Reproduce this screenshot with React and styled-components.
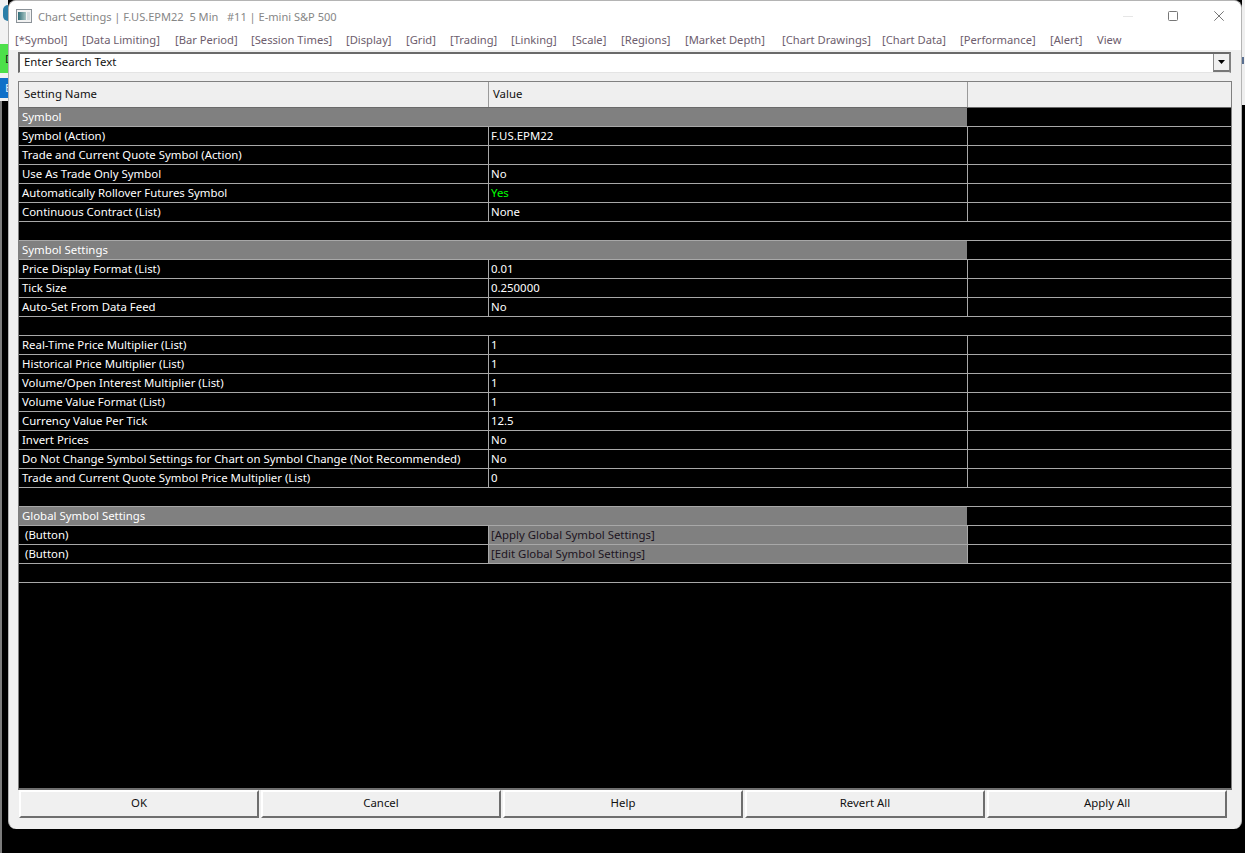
import styled, { createGlobalStyle } from "styled-components";

const GlobalStyle = createGlobalStyle`
  html, body {
    margin: 0;
    padding: 0;
    background: #000;
    overflow: hidden;
  }
`;

const TABS = [
  ["[*Symbol]", 15], ["[Data Limiting]", 82], ["[Bar Period]", 175], ["[Session Times]", 251],
  ["[Display]", 346], ["[Grid]", 406], ["[Trading]", 450], ["[Linking]", 511], ["[Scale]", 572],
  ["[Regions]", 621], ["[Market Depth]", 685], ["[Chart Drawings]", 782], ["[Chart Data]", 882],
  ["[Performance]", 960], ["[Alert]", 1050], ["View", 1097],
];

const ROWS = [
  { section: "Symbol" },
  { name: "Symbol (Action)", value: "F.US.EPM22" },
  { name: "Trade and Current Quote Symbol (Action)", value: "" },
  { name: "Use As Trade Only Symbol", value: "No" },
  { name: "Automatically Rollover Futures Symbol", value: "Yes", green: true },
  { name: "Continuous Contract (List)", value: "None" },
  { blank: true },
  { section: "Symbol Settings" },
  { name: "Price Display Format (List)", value: "0.01" },
  { name: "Tick Size", value: "0.250000" },
  { name: "Auto-Set From Data Feed", value: "No" },
  { blank: true },
  { name: "Real-Time Price Multiplier (List)", value: "1" },
  { name: "Historical Price Multiplier (List)", value: "1" },
  { name: "Volume/Open Interest Multiplier (List)", value: "1" },
  { name: "Volume Value Format (List)", value: "1" },
  { name: "Currency Value Per Tick", value: "12.5" },
  { name: "Invert Prices", value: "No" },
  { name: "Do Not Change Symbol Settings for Chart on Symbol Change (Not Recommended)", value: "No" },
  { name: "Trade and Current Quote Symbol Price Multiplier (List)", value: "0" },
  { blank: true },
  { section: "Global Symbol Settings" },
  { name: "(Button)", value: "[Apply Global Symbol Settings]", button: true },
  { name: "(Button)", value: "[Edit Global Symbol Settings]", button: true },
  { blank: true },
];

const BUTTONS = ["OK", "Cancel", "Help", "Revert All", "Apply All"];

const App = () => {
  return (
    <Desktop>
      <GlobalStyle />
      <LeftStrip>
        <Globe />
        <GreenTab>D</GreenTab>
        <BlueTab>E</BlueTab>
        <StripEdge />
      </LeftStrip>
      <Window>
        <TitleBar>
          <AppIcon viewBox="0 0 16 14">
            <defs>
              <linearGradient id="iconFill" x1="0" x2="1" y1="0" y2="0">
                <stop offset="0" stopColor="#2f6d78" />
                <stop offset="1" stopColor="#a9c6c4" />
              </linearGradient>
            </defs>
            <rect x="0.5" y="0.5" width="15" height="13" fill="#f2f2f2" stroke="#8b9298" />
            <rect x="2" y="3" width="8" height="8" fill="url(#iconFill)" />
            <rect x="11" y="3" width="3" height="8" fill="#d5dcdf" />
          </AppIcon>
          <Title>Chart Settings | F.US.EPM22&nbsp; 5 Min &nbsp; #11 | E-mini S&amp;P 500</Title>
          <WindowButtons>
            <svg width="10" height="1" viewBox="0 0 10 1"><rect width="10" height="1" fill="#e6e6e6" /></svg>
            <svg width="11" height="10" viewBox="0 0 11 10"><rect x="0.5" y="0.5" width="9" height="9" rx="1" fill="none" stroke="#777" /></svg>
            <svg width="10" height="10" viewBox="0 0 10 10"><path d="M0.3 0.3 L9.7 9.7 M9.7 0.3 L0.3 9.7" stroke="#777" fill="none" /></svg>
          </WindowButtons>
        </TitleBar>
        <TabBar>
          {TABS.map(([label, x], i) => (
            <Tab key={label} style={{ width: (i < TABS.length - 1 ? TABS[i + 1][1] : 1130) - x }}>{label}</Tab>
          ))}
        </TabBar>
        <Body>
          <SearchBox>
            <SearchText>Enter Search Text</SearchText>
            <DropButton><svg width="7" height="4" viewBox="0 0 7 4"><path d="M0 0 H7 L3.5 4 Z" fill="#000" /></svg></DropButton>
          </SearchBox>
          <Table>
            <HeaderRow>
              <HeaderCell>Setting Name</HeaderCell>
              <HeaderCell>Value</HeaderCell>
              <HeaderCell />
            </HeaderRow>
            {ROWS.map((row, i) => {
              if (row.section) {
                return (
                  <Row key={i}>
                    <SectionCell>{row.section}</SectionCell>
                    <Cell $plain />
                  </Row>
                );
              }
              if (row.blank) return <BlankRow key={i} />;
              return (
                <Row key={i}>
                  <Cell $indent={row.button}>{row.name}</Cell>
                  <Cell $green={row.green} $button={row.button}>{row.value}</Cell>
                  <Cell />
                </Row>
              );
            })}
            <Filler />
          </Table>
          <ButtonBar>
            {BUTTONS.map((b) => <BarButton key={b}>{b}</BarButton>)}
          </ButtonBar>
        </Body>
      </Window>
      <RightStrip>
        <RightMark />
      </RightStrip>
    </Desktop>
  );
};

const Desktop = styled.div`
  display: flex;
  width: 1245px;
  height: 853px;
  background: #000;
  font-family: "Noto Sans", "Open Sans", sans-serif;
  font-size: 11.4px;
  overflow: hidden;
`;
const LeftStrip = styled.div`
  display: flex;
  flex-direction: column;
  width: 8px;
  flex: none;
  background: #f2f2f2;
`;
const Globe = styled.div`
  flex: none;
  width: 5px;
  height: 16px;
  margin: 5px 0 23px 3px;
  border-radius: 6px 0 0 6px;
  background: #2c7fa8;
`;
const GreenTab = styled.div`
  flex: none;
  height: 29px;
  padding-left: 5px;
  line-height: 29px;
  color: #1a1a1a;
  background: #4de04a;
  overflow: hidden;
`;
const BlueTab = styled.div`
  flex: none;
  height: 20px;
  margin-top: 5px;
  padding-left: 5px;
  line-height: 20px;
  color: #e8f2fb;
  background: #1070c8;
  overflow: hidden;
`;
const StripEdge = styled.div`
  flex: 1;
  margin-top: 3px;
  background: #000;
  border-left: 2px solid #7c7c7c;
`;
const Window = styled.div`
  display: flex;
  flex-direction: column;
  flex: none;
  width: 1234px;
  height: 829px;
  box-sizing: border-box;
  background: #f0f0f0;
  border: 1px solid #b4b4b4;
  border-bottom: none;
  border-radius: 8px;
  overflow: hidden;
`;
const RightStrip = styled.div`
  flex: 1;
  height: 105px;
  background: #efefef;
`;
const RightMark = styled.div`
  width: 2px;
  height: 7px;
  margin-top: 57px;
  background: #5a6f90;
`;
const TitleBar = styled.div`
  display: flex;
  align-items: center;
  height: 30px;
  padding-left: 7px;
  background: #fff;
`;
const AppIcon = styled.svg`
  width: 16px;
  height: 14px;
  margin-right: 6px;
`;
const Title = styled.div`
  color: #868686;
  font-size: 11.05px;
  white-space: nowrap;
`;
const WindowButtons = styled.div`
  display: flex;
  align-items: center;
  gap: 35px;
  margin-left: auto;
  margin-right: 17px;
`;
const TabBar = styled.div`
  display: flex;
  height: 19px;
  padding-left: 6px;
  background: #fff;
`;
const Tab = styled.div`
  flex: none;
  color: #6d5d6d;
  font-size: 11.2px;
  line-height: 18px;
  white-space: nowrap;
`;
const Body = styled.div`
  display: flex;
  flex-direction: column;
  flex: 1;
  min-height: 0;
  padding: 2px 9px 11px 9px;
`;
const SearchBox = styled.div`
  display: flex;
  align-items: stretch;
  justify-content: space-between;
  flex: none;
  height: 21px;
  box-sizing: border-box;
  margin-right: 1px;
  background: #fff;
  border-style: solid;
  border-width: 2px 2px 1px 2px;
  border-color: #6a6a6a #808080 #e4e4e4 #6a6a6a;
`;
const SearchText = styled.div`
  padding-left: 4px;
  line-height: 15px;
  color: #111;
`;
const DropButton = styled.div`
  display: flex;
  align-items: center;
  justify-content: center;
  width: 16px;
  box-sizing: border-box;
  background: #f0f0f0;
  border-left: 1px solid #8a8a8a;
  border-bottom: 2px solid #777;
`;
const Table = styled.div`
  display: flex;
  flex-direction: column;
  flex: 1;
  min-height: 0;
  margin-top: 8px;
  background: #000;
  border: 1px solid #808080;
  border-bottom: 2px solid #6e6e6e;
`;
const HeaderRow = styled.div`
  display: grid;
  grid-template-columns: 469px 479px 1fr;
  flex: none;
  height: 26px;
  box-sizing: border-box;
  background: #efefef;
  border-bottom: 1px solid #6a6a6a;
`;
const HeaderCell = styled.div`
  padding-left: 4px;
  line-height: 24px;
  color: #111;
  border-left: 1px solid #9a9a9a;
  &:first-child {
    padding-left: 5px;
    border-left: none;
  }
`;
const Row = styled.div`
  display: grid;
  grid-template-columns: 469px 479px 1fr;
  flex: none;
  height: 19px;
  box-sizing: border-box;
  border-bottom: 1px solid #a8a8a8;
`;
const Cell = styled.div`
  box-sizing: border-box;
  padding-left: 2px;
  line-height: 18px;
  color: ${(p) => (p.$green ? "#00ff00" : p.$button ? "#1c1420" : "#fff")};
  background: ${(p) => (p.$button ? "#808080" : "#000")};
  border-left: ${(p) => (p.$plain ? "none" : "1px solid #a8a8a8")};
  white-space: nowrap;
  &:first-child {
    padding-left: ${(p) => (p.$indent ? 6 : 3)}px;
    border-left: none;
  }
`;
const SectionCell = styled.div`
  grid-column: 1 / span 2;
  padding-left: 3px;
  line-height: 18px;
  color: #fff;
  background: #808080;
`;
const BlankRow = styled.div`
  flex: none;
  height: 19px;
  box-sizing: border-box;
  background: #000;
  border-bottom: 1px solid #a8a8a8;
`;
const Filler = styled.div`
  flex: 1;
  background: #000;
`;
const ButtonBar = styled.div`
  display: grid;
  grid-template-columns: repeat(5, 240px);
  gap: 2px;
  flex: none;
  height: 28px;
  padding-left: 1px;
`;
const BarButton = styled.div`
  display: flex;
  align-items: center;
  justify-content: center;
  box-sizing: border-box;
  padding-bottom: 3px;
  color: #111;
  background: #f0f0f0;
  border: 2px solid #fff;
  border-right-color: #6e6e6e;
  border-bottom-color: #6e6e6e;
`;

export default App;
